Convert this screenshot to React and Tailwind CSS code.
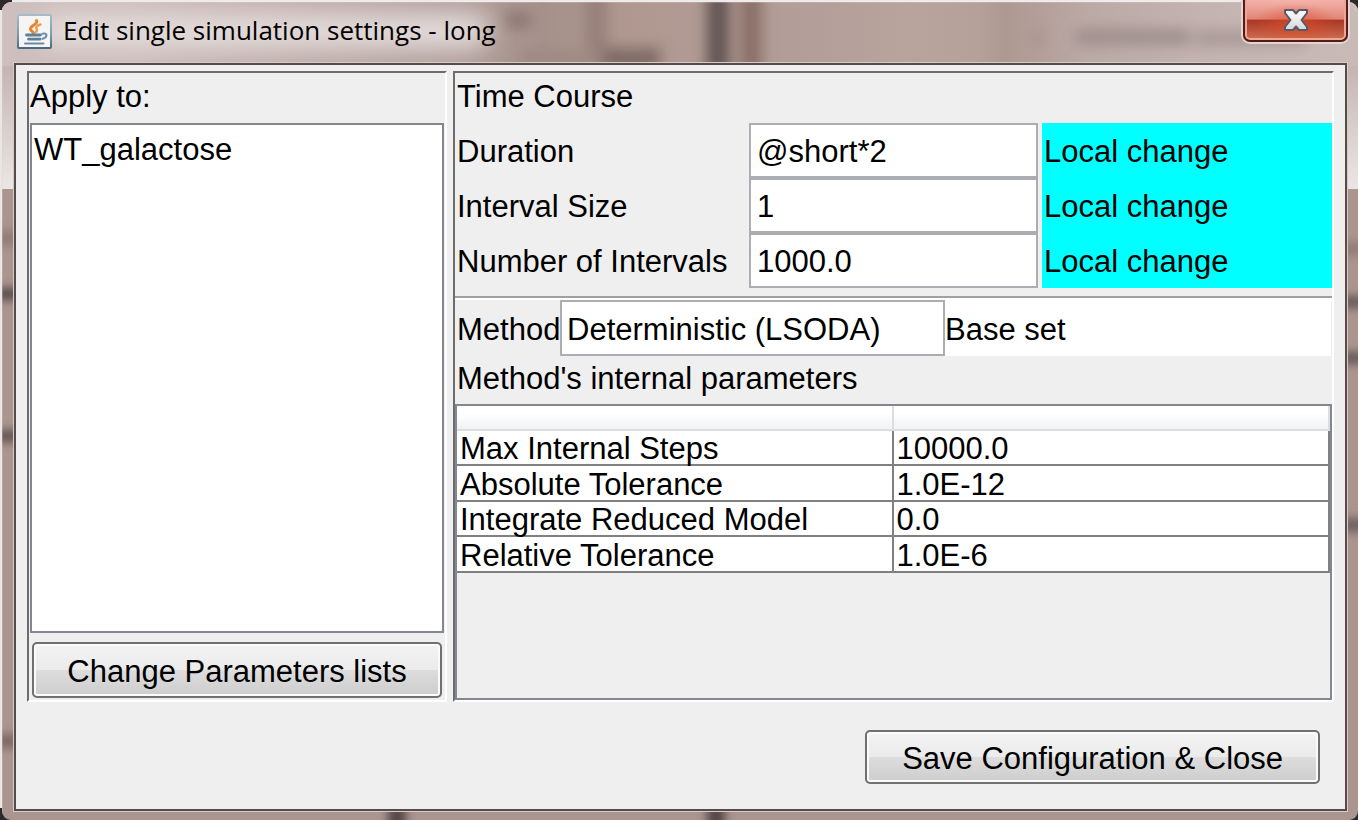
import { useState } from "react";

const timeCourse = [
  { id: "duration", label: "Duration", value: "@short*2", source: "Local change" },
  { id: "interval", label: "Interval Size", value: "1", source: "Local change" },
  { id: "count", label: "Number of Intervals", value: "1000.0", source: "Local change" },
];

const parameters = [
  ["Max Internal Steps", "10000.0"],
  ["Absolute Tolerance", "1.0E-12"],
  ["Integrate Reduced Model", "0.0"],
  ["Relative Tolerance", "1.0E-6"],
];

const buttonStyle =
  "rounded-[5px] border-2 border-[#707070] bg-[linear-gradient(180deg,#f3f3f3_0%,#ebebeb_50%,#dddddd_50%,#cdcdcd_100%)] pt-[3px] shadow-[inset_0_0_0_2px_#fbfbfb] whitespace-nowrap";

// Translucent window frame with the blurred desktop behind it.
function Glass() {
  return (
    <svg
      className="absolute inset-0 h-full w-full"
      viewBox="0 0 1358 820"
      preserveAspectRatio="none"
      aria-hidden="true"
    >
      <defs>
        <linearGradient id="top" x1="0" x2="1" y1="0" y2="0">
          <stop offset="0" stopColor="#cdbfbd" />
          <stop offset="0.1" stopColor="#cbbbb8" />
          <stop offset="0.33" stopColor="#b3a09c" />
          <stop offset="0.4" stopColor="#a5918b" />
          <stop offset="0.46" stopColor="#b09890" />
          <stop offset="0.6" stopColor="#b39e99" />
          <stop offset="0.67" stopColor="#b9a39d" />
          <stop offset="0.72" stopColor="#b5a09a" />
          <stop offset="0.74" stopColor="#ae9892" />
          <stop offset="0.8" stopColor="#bba9a5" />
          <stop offset="0.9" stopColor="#c5b5b2" />
          <stop offset="1" stopColor="#c9bab7" />
        </linearGradient>
        <linearGradient id="shine" x1="0" x2="0" y1="0" y2="1">
          <stop offset="0" stopColor="#c4b4b2" />
          <stop offset="0.6" stopColor="#dcd3d1" />
          <stop offset="1" stopColor="#ebe6e5" />
        </linearGradient>
        <filter id="soft" x="-50%" y="-50%" width="200%" height="200%">
          <feGaussianBlur stdDeviation="7" />
        </filter>
        <filter id="fine" x="-50%" y="-50%" width="200%" height="200%">
          <feGaussianBlur stdDeviation="5" />
        </filter>
        <filter id="glow" x="-20%" y="-80%" width="140%" height="260%">
          <feGaussianBlur stdDeviation="12" />
        </filter>
        <clipPath id="frame">
          <rect x="2" y="2" width="1356" height="818" rx="9" />
        </clipPath>
      </defs>
      <rect width="1358" height="820" fill="#2c2a2a" />
      <rect x="12" width="1334" height="10" fill="#efebea" />
      <rect y="10" width="10" height="798" fill="#ebe6e4" />
      <g clipPath="url(#frame)">
        <rect width="1358" height="820" fill="#ab958f" />
        <rect width="1358" height="68" fill="url(#top)" />
        <g filter="url(#soft)">
          <rect x="585" y="-20" width="22" height="100" fill="#98807a" />
          <rect x="602" y="48" width="58" height="22" fill="#7e6b66" />
          <rect x="707" y="-20" width="22" height="100" fill="#625453" />
          <rect x="740" y="-20" width="22" height="100" fill="#8b7069" />
          <rect x="505" y="12" width="26" height="16" fill="#8c7871" />
          <rect x="520" y="50" width="80" height="20" fill="#9f8a84" />
          <rect x="1075" y="29" width="115" height="16" fill="#9f8f8c" />
          <rect x="1195" y="30" width="110" height="16" fill="#a99997" />
          <rect x="1032" y="32" width="12" height="12" fill="#a4928e" />
        </g>
        <rect x="40" y="14" width="450" height="34" rx="17" fill="#e4dddc" filter="url(#glow)" />
        <rect y="66" width="14" height="123" fill="url(#shine)" />
        <rect x="1347" y="66" width="12" height="123" fill="url(#shine)" />
        <g filter="url(#fine)">
          <rect x="-5" y="230" width="26" height="16" fill="#927d78" />
          <rect x="-5" y="288" width="26" height="12" fill="#54484a" />
          <rect x="-5" y="430" width="26" height="12" fill="#5f5253" />
          <rect x="-5" y="734" width="26" height="14" fill="#7b6864" />
          <rect x="1340" y="242" width="26" height="14" fill="#927d78" />
          <rect x="1340" y="296" width="26" height="12" fill="#66585a" />
          <rect x="1340" y="352" width="26" height="12" fill="#66585a" />
          <rect x="1340" y="518" width="26" height="14" fill="#6e6060" />
          <rect x="388" y="805" width="18" height="25" fill="#544749" />
          <rect x="707" y="805" width="18" height="25" fill="#544749" />
        </g>
        <path
          d="M2 820V11a9 9 0 0 1 9-9H1347a9 9 0 0 1 9 9"
          fill="none"
          stroke="#ddd4d2"
          strokeOpacity=".6"
        />
      </g>
    </svg>
  );
}

function JavaIcon() {
  return (
    <svg className="h-[35px] w-[35px] shrink-0" viewBox="0 0 35 35" aria-hidden="true">
      <defs>
        <linearGradient id="edge" x1="0" x2="0" y1="0" y2="1">
          <stop offset="0" stopColor="#a6bccb" />
          <stop offset="0.6" stopColor="#8198aa" />
          <stop offset="1" stopColor="#4b6880" />
        </linearGradient>
      </defs>
      <rect x="1" y="1" width="33" height="33" rx="1" fill="#f5f5f6" stroke="url(#edge)" strokeWidth="2" />
      <g fill="none" strokeLinecap="round">
        <path d="M19.500 6.500c2 4-6.500 5-6 8.500.3 2 2.500 2.500 3 4" stroke="#e8842e" strokeWidth="3" />
        <path d="M23.500 10.500c-3.500 1-5 2.500-4 4 .8 1.200.5 2.500-.5 3.500" stroke="#ee9a50" strokeWidth="2.400" />
        <path d="M9.500 21h14M11.500 25.200h11.500" stroke="#5c7f9a" strokeWidth="2.800" />
        <path d="M25.500 19.800c5-1.500 5.500 3.500 0 5" stroke="#7391a8" strokeWidth="2.200" />
        <path d="M8 29.500h18.500" stroke="#6c8ba3" strokeWidth="2" />
      </g>
    </svg>
  );
}

function CloseIcon() {
  return (
    <svg className="h-6 w-[26px]" viewBox="0 0 26 24" aria-hidden="true">
      <defs>
        <linearGradient id="cross" x1="0" x2="0" y1="0" y2="1">
          <stop offset="0" stopColor="#ffffff" />
          <stop offset="1" stopColor="#d6d6d6" />
        </linearGradient>
      </defs>
      <path
        d="M2 2H10L13 5.500 16 2H24V5L18.500 12 24 19V22H16L13 18.500 10 22H2V19L7.500 12 2 5Z"
        fill="url(#cross)"
        stroke="#565a6b"
        strokeWidth="2"
        strokeLinejoin="round"
      />
    </svg>
  );
}

export default function App() {
  const [values, setValues] = useState(
    Object.fromEntries(timeCourse.map((row) => [row.id, row.value]))
  );

  return (
    <div className="relative flex min-h-screen flex-col pr-[10px] pb-2 pl-[13px] font-['Liberation_Sans',Arial,sans-serif] text-[31px] leading-9 text-black">
      <Glass />
      <header className="relative flex h-[62px] items-start justify-between">
        <div className="flex items-center gap-[11px] pt-[14px] pl-1">
          <JavaIcon />
          <h1 className="pb-[3px] font-['Open_Sans','Noto_Sans',sans-serif] text-[26px] leading-8 whitespace-nowrap">
            Edit single simulation settings - long
          </h1>
        </div>
        <button
          type="button"
          aria-label="Close"
          className="flex h-[42px] w-[105px] items-center justify-center rounded-b-[7px] border-2 border-t-0 border-[#571a14] bg-[radial-gradient(ellipse_at_50%_60%,rgba(222,78,42,0.7)_0%,transparent_60%),linear-gradient(180deg,#f4b3aa_0%,#e18576_48%,#a83526_50%,#cf7050_100%)] shadow-[0_0_0_2px_#e3d5d2,inset_0_-2px_0_#eda994,inset_2px_0_0_#e8a79b,inset_-2px_0_0_#e8a79b]"
        >
          <CloseIcon />
        </button>
      </header>

      <div className="relative flex flex-1 flex-col border border-[#d6cbc8]">
        <main className="flex flex-1 flex-col border-2 border-[#574b4a] bg-[#efefef] pt-[6px] pr-[11px] pl-[11px]">
          <div className="grid flex-1 grid-cols-[420px_minmax(0,1fr)] gap-[6px]">
            <section className="flex flex-col border-2 border-t-[#6d6d6d] border-r-white border-b-white border-l-[#6d6d6d]">
              <label htmlFor="targets" className="flex h-[50px] items-center pb-[2px] pl-px">
                Apply to:
              </label>
              <select
                id="targets"
                size={2}
                className="mr-px ml-px w-auto flex-1 appearance-none overflow-hidden border-2 border-[#828790] bg-white p-0 outline-none"
              >
                <option className="px-[2px] pt-[7px]">WT_galactose</option>
              </select>
              <button type="button" className={`mx-[3px] mt-[9px] mb-[2px] h-14 ${buttonStyle}`}>
                Change Parameters lists
              </button>
            </section>

            <section className="flex flex-col border-2 border-t-[#6d6d6d] border-r-white border-b-white border-l-[#6d6d6d]">
              <h2 className="flex h-[50px] items-center pb-[2px] pl-[2px]">Time Course</h2>
              {timeCourse.map((row) => (
                <div key={row.id} className="grid h-[55px] grid-cols-[294px_289px_minmax(0,1fr)]">
                  <label htmlFor={row.id} className="flex items-center pt-[3px] pl-[2px] whitespace-nowrap">
                    {row.label}
                  </label>
                  <input
                    id={row.id}
                    value={values[row.id]}
                    onChange={(e) => setValues({ ...values, [row.id]: e.target.value })}
                    className="min-w-0 border-2 border-[#abadb3] bg-white px-[6px] pt-[3px] outline-none"
                  />
                  <span className="ml-1 flex items-center bg-[#00ffff] pt-[3px] pl-[2px]">{row.source}</span>
                </div>
              ))}
              <hr className="mt-2 h-1 border-t-2 border-b-2 border-t-[#a0a0a0] border-b-white" />
              <div className="mr-px flex h-[56px] bg-white">
                <label htmlFor="method" className="flex w-[105px] items-center bg-[#efefef] pt-[3px] pl-[2px]">
                  Method
                </label>
                <select
                  id="method"
                  className="w-[385px] appearance-none border-2 border-[#abadb3] bg-white px-[5px] pt-[3px] outline-none"
                >
                  <option>Deterministic (LSODA)</option>
                </select>
                <span className="flex items-center pt-[3px]">Base set</span>
              </div>
              <h3 className="flex h-12 items-center pb-[2px] pl-[2px]">Method's internal parameters</h3>
              <div className="flex-1 border-2 border-[#828790]">
                <table
                  aria-label="Method's internal parameters"
                  className="w-full table-fixed border-separate border-spacing-0 bg-white"
                >
                  <thead>
                    <tr className="h-[25px]">
                      <th className="w-1/2 border-r-2 border-b-2 border-[#dcdde0] bg-linear-to-b from-white from-30% to-[#f1f2f4] p-0" />
                      <th className="w-1/2 border-r-2 border-b-2 border-[#dcdde0] bg-linear-to-b from-white from-30% to-[#f1f2f4] p-0" />
                    </tr>
                  </thead>
                  <tbody>
                    {parameters.map(([name, value]) => (
                      <tr key={name} className="h-9 odd:h-[35px]">
                        <td className="border-r-2 border-b-2 border-[#808080] p-0 pt-[3px] pl-[3px] leading-[30px] whitespace-nowrap">
                          {name}
                        </td>
                        <td className="border-r-2 border-b-2 border-[#808080] p-0 pt-[3px] pl-[3px] leading-[30px] whitespace-nowrap">
                          {value}
                        </td>
                      </tr>
                    ))}
                  </tbody>
                </table>
              </div>
            </section>
          </div>
          <footer className="flex justify-end pt-7 pr-[14px] pb-[25px]">
            <button type="button" className={`h-[54px] px-[35px] ${buttonStyle}`}>
              Save Configuration &amp; Close
            </button>
          </footer>
        </main>
      </div>
    </div>
  );
}
